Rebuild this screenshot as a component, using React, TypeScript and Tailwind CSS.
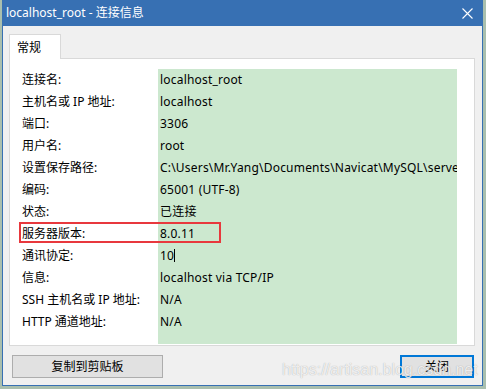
export default function App() {
  const rows = [
    { label: "连接名:", value: "localhost_root" },
    { label: "主机名或 IP 地址:", value: "localhost" },
    { label: "端口:", value: "3306" },
    { label: "用户名:", value: "root" },
    { label: "设置保存路径:", value: "C:\\Users\\Mr.Yang\\Documents\\Navicat\\MySQL\\servers\\localhost_root" },
    { label: "编码:", value: "65001 (UTF-8)" },
    { label: "状态:", value: "已连接" },
    { label: "服务器版本:", value: "8.0.11" },
    { label: "通讯协定:", value: "10", cursor: true },
    { label: "信息:", value: "localhost via TCP/IP" },
    { label: "SSH 主机名或 IP 地址:", value: "N/A" },
    { label: "HTTP 通道地址:", value: "N/A" },
  ];

  return (
    <div className="relative w-[486px] h-[389px] bg-[#a9bfae] text-[12px] text-black font-['Noto_Sans','Noto_Sans_CJK_SC',sans-serif]">
      <div className="ml-[2px] w-[481px] h-[386px] flex flex-col border-x border-b border-[#3770b3] bg-[#f0f0f0]">
        {/* title bar */}
        <div className="h-[26px] flex items-center bg-[#3770b3] text-white pl-[3px]">
          <span className="leading-[14px]">localhost_root - 连接信息</span>
          <svg className="ml-auto mr-[9px]" width="11" height="11" viewBox="0 0 11 11">
            <path d="M0.5 0.5 L10.5 10.5 M10.5 0.5 L0.5 10.5" stroke="white" strokeWidth="1.1" fill="none" />
          </svg>
        </div>

        {/* tab */}
        <div className="ml-[6px] mt-[8px] w-[52px] h-[25px] -mb-px relative z-10 bg-white border border-b-0 border-[#d9d9d9] pl-[7px] pt-[4px] leading-[18px]">
          常规
        </div>

        {/* tab panel */}
        <div className="relative ml-[6px] w-[466px] h-[288px] bg-white border border-[#d9d9d9] flex pl-[12px] pt-[10px] pb-[1px]">
          <div className="w-[136px] flex flex-col">
            {rows.map((r) => (
              <div key={r.label} className="h-[22px] leading-[21px] whitespace-nowrap">
                {r.label}
              </div>
            ))}
          </div>
          <div className="w-[299px] bg-[#cce8cf] flex flex-col pl-[2px] overflow-hidden tracking-[0.2px]">
            {rows.map((r) => (
              <div key={r.label} className="h-[22px] leading-[21px] whitespace-nowrap flex items-start">
                <span>{r.value}</span>
                {r.cursor && <span className="inline-block w-px h-[13px] bg-black mt-[4px]" />}
              </div>
            ))}
          </div>

          {/* highlight box */}
          <div className="absolute left-[9px] top-[163px] w-[202px] h-[21px] border-2 border-[#e8383d]" />
        </div>

        {/* buttons */}
        <div className="flex mt-[9px] pl-[9px] pr-[8px] items-start">
          <button className="w-[151px] h-[23px] bg-[#e1e1e1] border border-[#adadad] leading-[19px]">
            复制到剪贴板
          </button>
          <button className="ml-auto w-[74px] h-[23px] bg-[#e1e1e1] border-2 border-[#0078d7] leading-[19px]">
            关闭
          </button>
        </div>
      </div>

      {/* watermark */}
      <div className="absolute left-[282px] top-[360px] leading-[20px] text-[16px] font-['Liberation_Sans',sans-serif] text-white/80 [text-shadow:0_0_1px_rgba(0,0,0,0.35)] pointer-events-none">
        https://artisan.blog.csdn.net
      </div>
    </div>
  );
}
